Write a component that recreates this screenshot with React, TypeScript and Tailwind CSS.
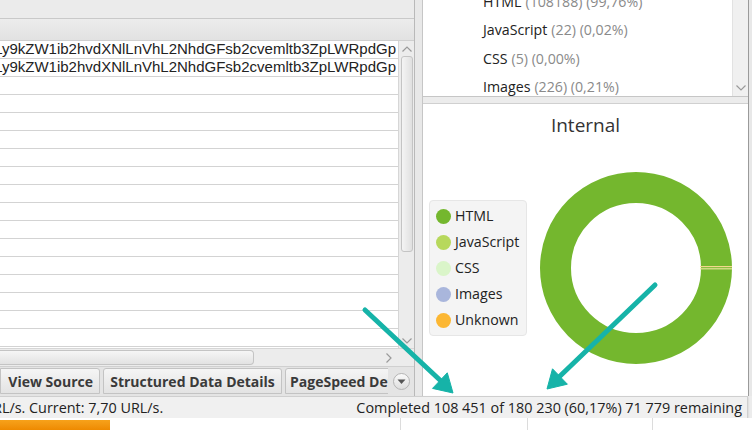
import React from "react";

const ROW_TEXT = "aHR0cHM6Ly9kZW1ib2hvdXNlLnVhL2NhdGFsb2cvemltb3ZpLWRpdGp";

function ChevUp() {
  return (
    <svg width="12" height="8" viewBox="0 0 12 8">
      <polyline points="1.5,6.5 6,2 10.5,6.5" fill="none" stroke="#9a9a9a" strokeWidth="1.2" />
    </svg>
  );
}
function ChevDown() {
  return (
    <svg width="12" height="8" viewBox="0 0 12 8">
      <polyline points="1.5,1.5 6,6 10.5,1.5" fill="none" stroke="#9a9a9a" strokeWidth="1.2" />
    </svg>
  );
}
function ChevRight() {
  return (
    <svg width="8" height="12" viewBox="0 0 8 12">
      <polyline points="1.5,1.5 6,6 1.5,10.5" fill="none" stroke="#9a9a9a" strokeWidth="1.2" />
    </svg>
  );
}

const legend = [
  { label: "HTML", color: "#74b72e" },
  { label: "JavaScript", color: "#b7d85c" },
  { label: "CSS", color: "#daf5c9" },
  { label: "Images", color: "#a9b6dc" },
  { label: "Unknown", color: "#fcb733" },
];

const listItems = [
  { label: "HTML", rest: "(108188) (99,76%)" },
  { label: "JavaScript", rest: "(22) (0,02%)" },
  { label: "CSS", rest: "(5) (0,00%)" },
  { label: "Images", rest: "(226) (0,21%)" },
];

export default function App() {
  const ui = { fontFamily: '"Open Sans", "Noto Sans", sans-serif' };
  return (
    <div className="relative w-[752px] h-[430px] overflow-hidden bg-[#ececec] flex flex-col" style={ui}>
      {/* main area */}
      <div className="flex h-[396px]">
        {/* left pane */}
        <div className="w-[415px] flex flex-col border-r border-[#b9b9b9] bg-[#ebebeb]">
          <div className="h-[19px] bg-[#ebebeb] border-b border-[#c9c9c9]" />
          <div className="h-[22px] bg-gradient-to-b from-[#ececec] to-[#e2e2e2] border-b border-[#cfcfcf]" />
          <div className="h-[307px] flex">
            <div className="w-[398px] bg-white overflow-hidden">
              {Array.from({ length: 18 }).map((_, i) => (
                <div
                  key={i}
                  className="h-[18px] border-b border-[#d3d3d3] flex justify-end items-center overflow-hidden whitespace-nowrap pr-[2px] text-[15px] text-[#222]"
                  style={{ fontFamily: '"Liberation Sans", Arial, sans-serif' }}
                >
                  {i < 2 ? ROW_TEXT : ""}
                </div>
              ))}
            </div>
            <div className="w-[16px] bg-[#ececec] border-l border-[#d6d6d6] flex flex-col items-center">
              <div className="h-[15px] flex items-center justify-center">
                <ChevUp />
              </div>
              <div className="w-[12px] h-[196px] rounded-[3px] border border-[#c4c4c4] bg-gradient-to-r from-[#f4f4f4] to-[#e0e0e0]" />
              <div className="flex-1" />
              <div className="h-[14px] flex items-center justify-center">
                <ChevDown />
              </div>
            </div>
          </div>
          <div className="h-[18px] flex bg-[#ececec] border-t border-[#d6d6d6]">
            <div className="w-[254px] h-[15px] mt-[1px] rounded-r-[4px] border border-l-0 border-[#c4c4c4] bg-gradient-to-b from-[#f6f6f6] to-[#e2e2e2]" />
            <div className="flex-1" />
            <div className="w-[14px] mr-[18px] flex items-center justify-center">
              <ChevRight />
            </div>
          </div>
          <div className="h-[30px] bg-[#e4e4e4] border-t border-[#d0d0d0] flex items-start pt-[1px] relative">
            <div className="w-[388px] flex gap-[3px] overflow-hidden">
              {[
                { t: "View Source", w: "w-[100px]", cls: "justify-end pr-[6px] rounded-tl-none" },
                { t: "Structured Data Details", w: "w-[179px]", cls: "justify-center" },
                { t: "PageSpeed Details", w: "w-[150px]", cls: "justify-start pl-[4px]" },
              ].map((tab) => (
                <div
                  key={tab.t}
                  className={`${tab.w} ${tab.cls} shrink-0 h-[26px] flex items-center rounded-t-[3px] border border-[#c3c3c3] bg-gradient-to-b from-[#f5f5f5] to-[#e3e3e3] text-[14px] font-bold text-[#3a3a3a] whitespace-nowrap`}
                >
                  {tab.t}
                </div>
              ))}
            </div>
            <div className="absolute left-[393px] top-[6px] w-[17px] h-[17px] rounded-full border border-[#b5b5b5] bg-gradient-to-b from-[#fafafa] to-[#dedede] flex items-center justify-center">
              <svg width="9" height="6" viewBox="0 0 9 6">
                <polygon points="0.5,0.5 8.5,0.5 4.5,5" fill="#555" />
              </svg>
            </div>
          </div>
        </div>

        {/* splitter */}
        <div className="w-[8px] bg-[#e8e8e8] border-r border-[#c6c6c6]" />

        {/* right pane */}
        <div className="w-[325px] flex flex-col">
          <div className="h-[97px] bg-white border-b border-[#c6c6c6] flex">
            <div className="flex-1 overflow-hidden pl-[60px]">
              <div className="-mt-[13px]">
                {listItems.map((it) => (
                  <div key={it.label} className="h-[28.5px] flex items-center text-[14.2px] whitespace-nowrap">
                    <span className="text-[#222]">{it.label}</span>
                    <span className="text-[#8a8a8a] ml-[4px]">{it.rest}</span>
                  </div>
                ))}
              </div>
            </div>
            <div className="w-[16px] bg-[#f0f0f0] border-l border-[#e2e2e2] flex flex-col justify-end items-center pb-[4px]">
              <ChevDown />
            </div>
          </div>
          <div className="h-[6px] bg-[#ececec]" />
          <div className="flex-1 bg-white border-t border-[#d0d0d0] flex flex-col items-center">
            <div className="mt-[7px] h-[28px] leading-[28px] text-[19px] text-[#333]">Internal</div>
            <div className="mt-[32px] w-full flex items-center pl-[6px]">
              <div className="w-[98px] h-[136px] rounded-[4px] bg-[#f4f4f4] border border-[#e6e6e6] flex flex-col justify-center pl-[6px]">
                {legend.map((l) => (
                  <div key={l.label} className="h-[26px] flex items-center gap-[4px] text-[14.2px] text-[#222]">
                    <span className="w-[15px] h-[15px] rounded-full" style={{ background: l.color }} />
                    <span>{l.label}</span>
                  </div>
                ))}
              </div>
              <svg className="ml-[12px]" width="194" height="194" viewBox="0 0 194 194">
                <circle cx="97" cy="97" r="80.5" fill="none" stroke="#74b72e" strokeWidth="31" />
                <line x1="161" y1="95.6" x2="193" y2="95.6" stroke="#f3d98d" strokeWidth="1.2" />
                <line x1="161" y1="97.8" x2="193" y2="97.8" stroke="#e6e49a" strokeWidth="1.2" />
              </svg>
            </div>
          </div>
        </div>
        <div className="flex-1 bg-[#e8e8e8] border-l border-[#9a9a9a]" />
      </div>

      {/* status bar */}
      <div className="h-[22px] w-[748px] bg-[#f0f0f0] border-t border-[#cfcfcf] border-r border-[#bdbdbd] flex items-center justify-between text-[14.4px] text-[#222] whitespace-nowrap overflow-hidden shadow-[0_1px_2px_rgba(0,0,0,0.15)]">
        <span className="-ml-[7px]">RL/s. Current: 7,70 URL/s.</span>
        <span className="pr-[5px]">Completed 108 451 of 180 230 (60,17%) 71 779 remaining</span>
      </div>

      {/* bottom strip */}
      <div className="flex-1 flex bg-white">
        <div className="w-[110px] mt-[2px] bg-gradient-to-b from-[#f7a21a] to-[#ee8a00]" />
        <div className="w-[291px] border-r border-[#dcdcdc]" />
        <div className="w-[127px] border-r border-[#dcdcdc]" />
        <div className="w-[125px] border-r border-[#dcdcdc]" />
        <div className="flex-1" />
      </div>

      {/* annotation arrows */}
      <svg className="absolute inset-0 pointer-events-none" width="752" height="430" viewBox="0 0 752 430">
        <g fill="#16b3a8" stroke="#16b3a8">
          <line x1="365" y1="310" x2="442" y2="382" strokeWidth="5" strokeLinecap="round" />
          <polygon points="453,393 432.5,388.4 447.3,372.8" strokeWidth="1" strokeLinejoin="round" />
          <line x1="655" y1="285" x2="558" y2="378" strokeWidth="5" strokeLinecap="round" />
          <polygon points="547,389 552.5,368.8 567.4,384.2" strokeWidth="1" strokeLinejoin="round" />
        </g>
      </svg>
    </div>
  );
}
